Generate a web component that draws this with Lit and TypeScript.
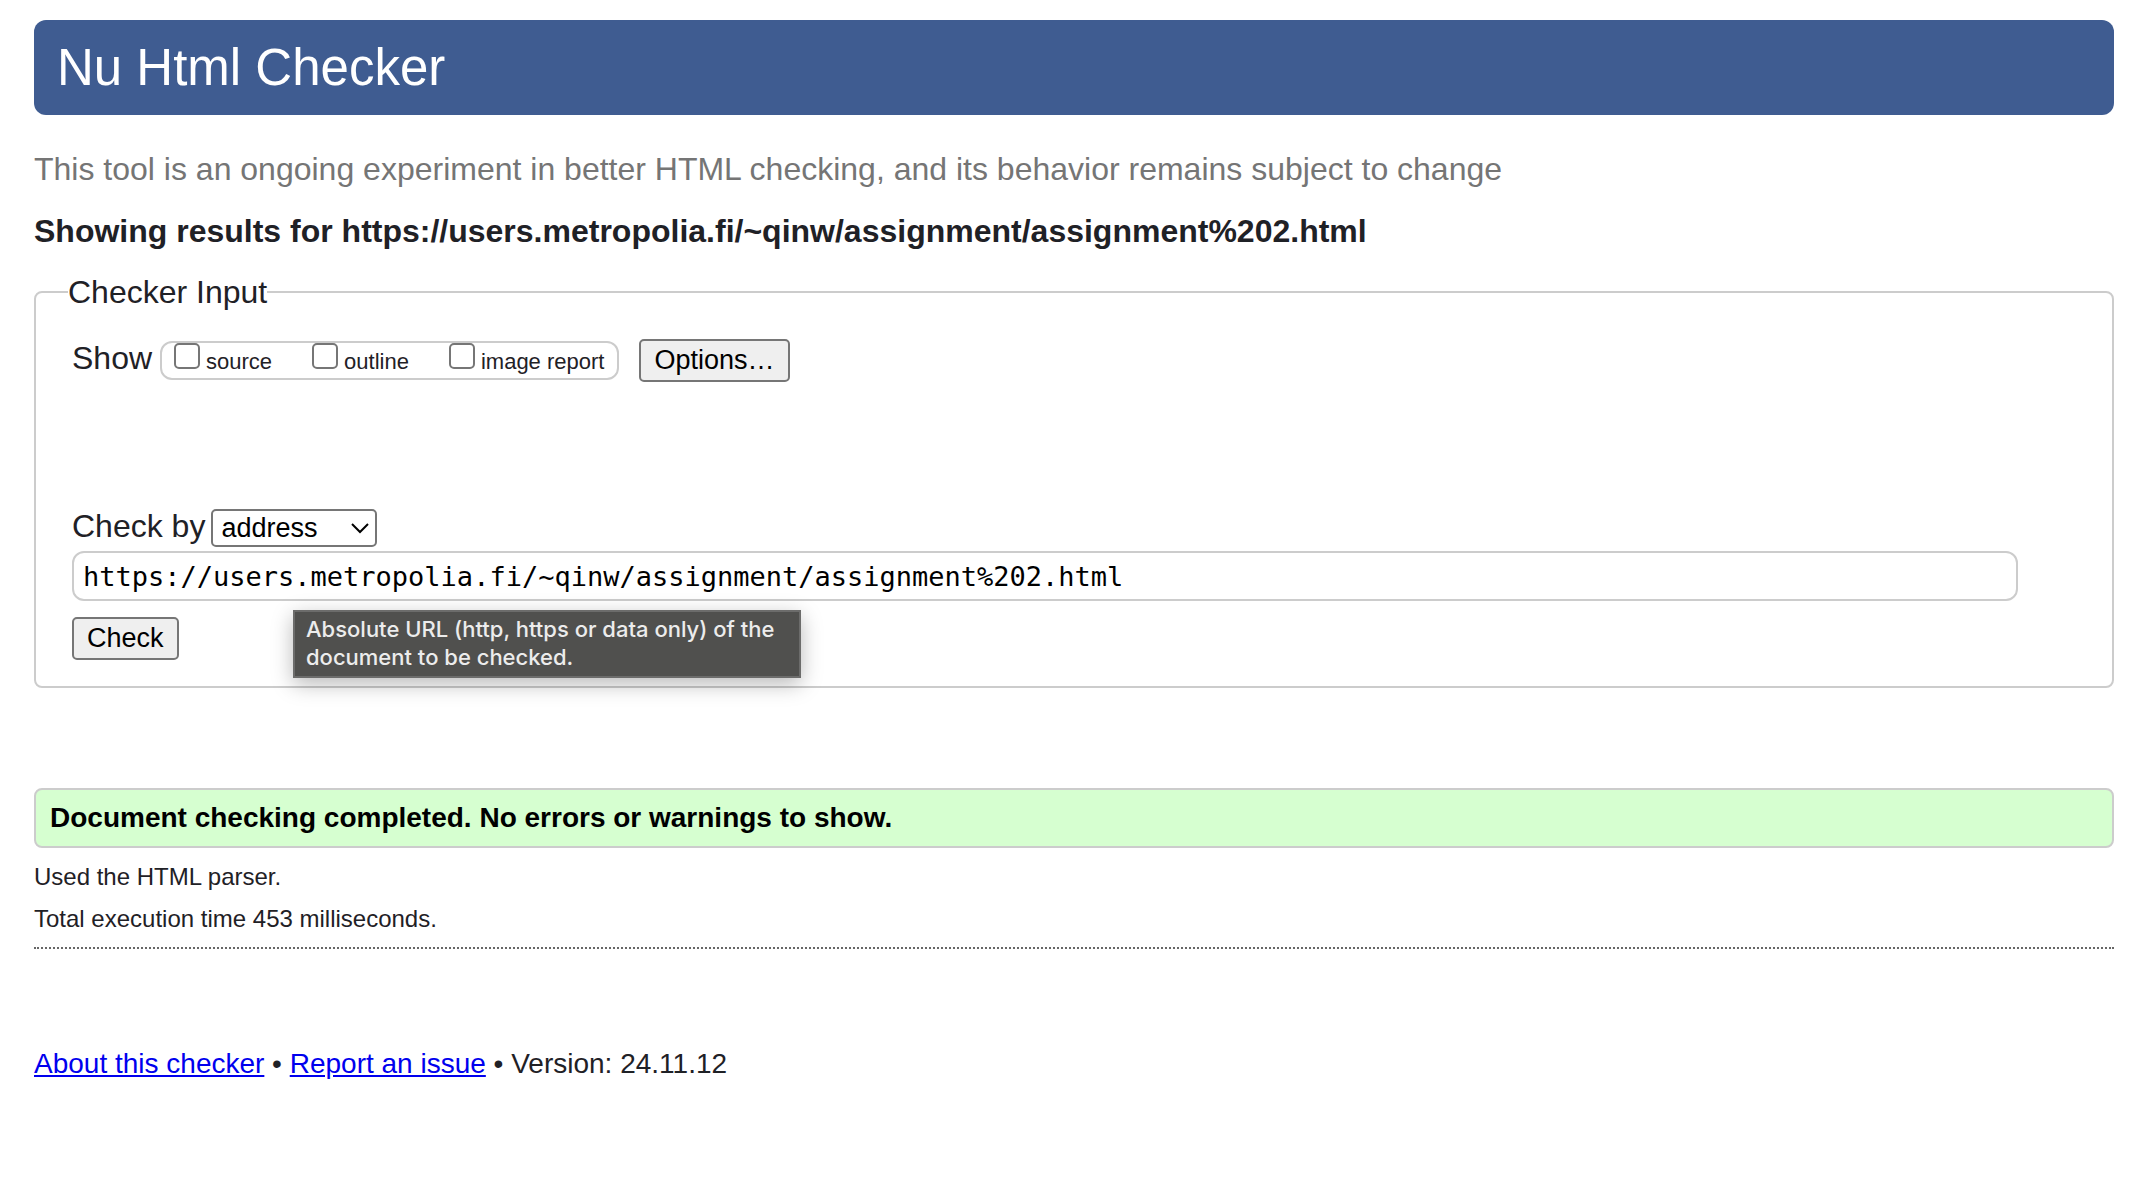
import { LitElement, html, css } from "lit";
import { customElement, state } from "lit/decorators.js";

@customElement("app-root")
class AppRoot extends LitElement {
  static styles = css`
    :host {
      display: block;
      padding: 20px 42px 20px 34px;
      font: 32px/36px "Liberation Sans", Arial, sans-serif;
      color: #1f2126;
      background: #fff;
    }
    * { box-sizing: border-box; }
    h1, h2, p { margin: 0; }
    .banner {
      padding: 0 23px;
      border-radius: 12px;
      background: #3f5c91;
      color: #fff;
      font-size: 51px;
      font-weight: 400;
      line-height: 95px;
    }
    .notice { margin-top: 36px; color: #757575; }
    .heading { margin-top: 26px; font-size: 32px; line-height: 36px; }
    .panel {
      margin: 24px 0 0;
      padding: 28px 34px 26px 36px;
      border: 2px solid #ccc;
      border-radius: 8px;
      min-width: 0;
    }
    .panel legend { padding: 0; margin-left: -4px; line-height: 38px; }
    .row { display: flex; align-items: baseline; }
    .show { gap: 8px; }
    .choices {
      display: flex;
      align-items: baseline;
      gap: 40px;
      padding: 0 13px 3px 12px;
      border: 2px solid #ccc;
      border-radius: 12px;
      font-size: 22px;
      line-height: 26px;
    }
    .choice { display: flex; align-items: baseline; gap: 6px; }
    .box {
      appearance: none;
      width: 26px;
      height: 26px;
      margin: 0;
      border: 2px solid #767676;
      border-radius: 5px;
      background: #fff;
    }
    .box:checked { background: #0075ff; }
    .button {
      height: 43px;
      padding: 0 13px 2px;
      border: 2px solid #767676;
      border-radius: 5px;
      background: #efefef;
      color: #000;
      font: 27px/36px "Liberation Sans", Arial, sans-serif;
    }
    .options { margin-left: 12px; }
    .method { margin-top: 126px; gap: 6px; }
    .picker { display: grid; align-items: center; }
    .picker > * { grid-area: 1 / 1; }
    .select {
      appearance: none;
      width: 166px;
      height: 38px;
      padding: 0 36px 0 8px;
      border: 2px solid #767676;
      border-radius: 5px;
      background: #fff;
      color: #000;
      font: 27px/34px "Liberation Sans", Arial, sans-serif;
    }
    .chevron {
      justify-self: end;
      width: 18px;
      height: 12px;
      margin-right: 8px;
      pointer-events: none;
    }
    .field { position: relative; margin-top: 4px; }
    .address {
      display: block;
      width: 97%;
      height: 50px;
      padding: 0 9px;
      border: 2px solid #ccc;
      border-radius: 12px;
      background: #fff;
      color: #000;
      font: 27px/46px "DejaVu Sans Mono", monospace;
    }
    .tip {
      position: absolute;
      left: 221px;
      top: 59px;
      width: 508px;
      padding: 3px 11px 5px;
      border: 2px solid #6c6c6b;
      background: #50504e;
      box-shadow: 0 6px 20px rgba(0, 0, 0, 0.28);
      color: #ececec;
      font: 500 22px/28px Inter, sans-serif;
    }
    .submit { margin-top: 16px; }
    .success {
      margin-top: 100px;
      padding: 0 14px;
      border: 2px solid #ccc;
      border-radius: 8px;
      background: #d6ffd0;
      color: #000;
      font-size: 28px;
      font-weight: 700;
      line-height: 56px;
    }
    .details {
      margin-top: 8px;
      padding-bottom: 7px;
      border-bottom: 2px dotted #666;
      font-size: 24px;
      line-height: 42px;
    }
    .footer { margin-top: 99px; font-size: 28px; line-height: 32px; }
    .footer a { color: #00e; text-decoration: underline; }
  `;

  @state() private address = "https://users.metropolia.fi/~qinw/assignment/assignment%202.html";

  render() {
    return html`
      <header><h1 class="banner">Nu Html Checker</h1></header>
      <main>
        <p class="notice">This tool is an ongoing experiment in better HTML checking, and its behavior remains subject to change</p>
        <h2 class="heading">Showing results for ${this.address}</h2>
        <form @submit=${(e: Event) => e.preventDefault()}>
          <fieldset class="panel">
            <legend>Checker Input</legend>
            <div class="row show">
              <span>Show</span>
              <div class="choices">
                ${["source", "outline", "image report"].map(
                  (name) => html`<label class="choice"><input class="box" type="checkbox" />${name}</label>`
                )}
              </div>
              <button class="button options" type="button">Options…</button>
            </div>
            <div class="row method">
              <label for="method">Check by</label>
              <div class="picker">
                <select class="select" id="method">
                  <option>address</option>
                </select>
                <svg class="chevron" viewBox="0 0 18 12" fill="none" stroke="#000" stroke-width="2" aria-hidden="true">
                  <path d="M1 2l8 8 8-8" />
                </svg>
              </div>
            </div>
            <div class="field">
              <input
                class="address"
                type="url"
                aria-labelledby="address-tip"
                .value=${this.address}
              />
              <div class="tip" id="address-tip" role="tooltip">
                Absolute URL (http, https or data only) of the document to be checked.
              </div>
            </div>
            <button class="button submit" type="submit">Check</button>
          </fieldset>
        </form>
        <p class="success">Document checking completed. No errors or warnings to show.</p>
        <div class="details">
          <p>Used the HTML parser.</p>
          <p>Total execution time 453 milliseconds.</p>
        </div>
      </main>
      <footer class="footer">
        <a href="#about">About this checker</a> • <a href="#issues">Report an issue</a> • Version: 24.11.12
      </footer>
    `;
  }
}
